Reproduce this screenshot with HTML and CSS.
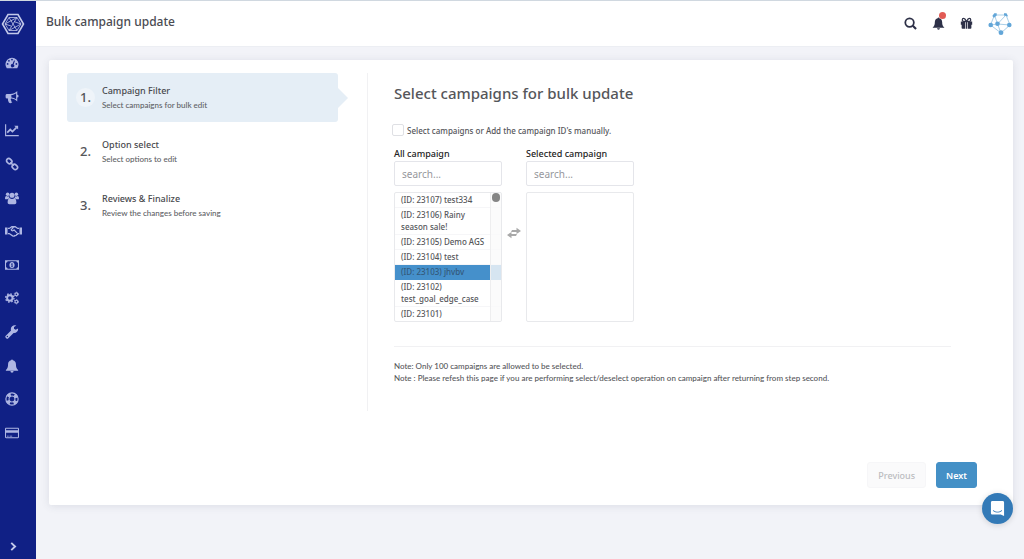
FILE: index.html
```html
<!DOCTYPE html>
<html lang="en">
<head>
    <meta charset="UTF-8">
    <meta name="viewport" content="width=device-width, initial-scale=1.0">
    <title>Bulk campaign update</title>
    <link rel="stylesheet" href="styles.css">
</head>
<body>
    <aside class="sidebar">
        <a href="#" class="logo" aria-label="Home">
            <svg viewBox="0 0 24 24" fill="none" stroke="currentColor">
                <path d="M7 2.500h10L22.500 12 17 21.500H7L1.500 12z" stroke-width="1.600"/>
                <path d="M8 5.500h8l4 6.500-4 6.500H8L4 12zM8 5.500l8 13M16 5.500l-8 13M4 12l12-6.500M20 12L8 18.500M4 12l6 2M20 12l-7-2.500" stroke-width=".8"/>
            </svg>
        </a>
        <nav class="menu">
            <a href="#" aria-label="Dashboard">
                <svg viewBox="0 0 16 16"><path fill-rule="evenodd" d="M2 14a7.500 7.500 0 1 1 12 0zM8 3a1 1 0 1 0 0 2 1 1 0 0 0 0-2zM4.500 4.500a1 1 0 1 0 0 2 1 1 0 0 0 0-2zM3 8a1 1 0 1 0 0 2 1 1 0 0 0 0-2zM13 8a1 1 0 1 0 0 2 1 1 0 0 0 0-2zM10.300 5L8.600 9.200a1.900 1.900 0 1 0 1.200.4l1.600-4.200z"/></svg>
            </a>
            <a href="#" aria-label="Campaigns">
                <svg viewBox="0 0 16 16"><path fill-rule="evenodd" d="M14 1v4.500a1.500 1.500 0 0 1 0 3V13c-2-1.800-4.500-3-7-3.200-.9.700-.3 1.600.2 2.300-.5.800.3 1.400 1.100 2-.8 1.200-3 1.100-3.900.3C3.800 12.700 3 11.500 3.500 9.800H2.300A1.600 1.600 0 0 1 .7 8.200V6.100c0-.9.700-1.600 1.600-1.600H6C9 4.500 12 3 14 1zm-1.300 2.600C11 4.900 9.200 5.500 7.300 5.700v2.900c1.900.2 3.700.8 5.400 2z"/></svg>
            </a>
            <a href="#" aria-label="Reports">
                <svg viewBox="0 0 16 16" fill="none" stroke="currentColor"><path d="M.7 1.500v13h15" stroke-width="1.300"/><path d="M2.500 11L6 7.500l2.500 2.300L13 5.300" stroke-width="2"/><path d="M10.500 3H15v4.500z" fill="currentColor" stroke="none"/></svg>
            </a>
            <a href="#" aria-label="Links">
                <svg viewBox="0 0 16 16" fill="none" stroke="currentColor" stroke-width="1.900"><rect x="1.600" y="2.200" width="6.500" height="5" rx="2.400" transform="rotate(45 4.800 4.700)"/><rect x="8" y="8.800" width="6.500" height="5" rx="2.400" transform="rotate(45 11.200 11.300)"/><path d="M6 6l4 4"/></svg>
            </a>
            <a href="#" aria-label="Affiliates">
                <svg viewBox="0 0 16 16"><circle cx="3" cy="3.600" r="2"/><circle cx="13" cy="3.600" r="2"/><circle cx="8" cy="4.900" r="2.900"/><path d="M0 8.500C0 6.600.7 5.600 1.500 5.700c1 .7 2 .6 3 .2 0 1 .4 1.800 1 2.500C4 8.500 3.500 9 3 9.500H1c-.6 0-1-.4-1-1zM16 8.500c0-1.900-.7-2.900-1.500-2.800-1 .7-2 .6-3 .2 0 1-.4 1.800-1 2.500 1.500.1 2 .6 2.500 1.100h2c.6 0 1-.4 1-1zM3 13c0-3 .8-4.500 2.500-4.700 1.500 1.200 3.500 1.200 5 0C12.200 8.500 13 10 13 13c0 1.200-.8 2-2 2H5c-1.200 0-2-.8-2-2z"/></svg>
            </a>
            <a href="#" aria-label="Partners">
                <svg class="wide" viewBox="0 0 20 14"><path d="M0 3h3v8H0zM17 3h3v8h-3z"/><path d="M3.500 4H5l3-2h4l3 2h1.500M3.500 10H5l4 2.700c1 .5 2 .3 2.600-.4 1 .2 1.700-.3 2-1 .8 0 1.300-.5 1.500-1.300h1.400M10 2.500L7.300 5.600c.5 1.500 2.300 1.500 3.400.1l3.600 3.800" fill="none" stroke="currentColor" stroke-width="1.500"/></svg>
            </a>
            <a href="#" aria-label="Payments">
                <svg viewBox="0 0 16 16"><path fill-rule="evenodd" d="M0 2.500h16v11H0zm3 1.200A2 2 0 0 1 1.200 5.500v5A2 2 0 0 1 3 12.300h10a2 2 0 0 1 1.800-1.800v-5A2 2 0 0 1 13 3.700z"/><path fill-rule="evenodd" d="M8 4.500c1.900 0 3 1.600 3 3.500s-1.100 3.500-3 3.500S5 9.900 5 8s1.100-3.500 3-3.500zM7 6.600v.8h.5v1.800H7v.8h2v-.8h-.4V5.900H8z"/></svg>
            </a>
            <a href="#" aria-label="Settings">
                <svg viewBox="0 0 16 16" fill="none" stroke="currentColor"><circle cx="5.500" cy="8" r="3.100" stroke-width="2.200"/><circle cx="5.500" cy="8" r="4.700" stroke-width="1.600" stroke-dasharray="1.800 1.890"/><circle cx="13" cy="3.800" r="1.600" stroke-width="1.300"/><circle cx="13" cy="3.800" r="2.500" stroke-width="1" stroke-dasharray="1.200 1.418"/><circle cx="13" cy="12.200" r="1.600" stroke-width="1.300"/><circle cx="13" cy="12.200" r="2.500" stroke-width="1" stroke-dasharray="1.200 1.418"/></svg>
            </a>
            <a href="#" aria-label="Tools">
                <svg viewBox="0 0 16 16"><path fill-rule="evenodd" d="M14.900 3.900l-2.700 1.500-1.900-1.100V2.200L13 .7A4.500 4.500 0 0 0 6.900 6.200L.9 12.200a1.700 1.700 0 0 0 0 2.400l.5.500a1.700 1.700 0 0 0 2.400 0l6-6a4.500 4.500 0 0 0 5.100-5.200zM2.700 12.300a.8.8 0 1 1 0 1.600.8.800 0 0 1 0-1.600z"/></svg>
            </a>
            <a href="#" aria-label="Alerts">
                <svg viewBox="0 0 16 16"><path d="M8 .5c.6 0 1 .4 1 1 2.300.5 3.500 2.300 3.500 4.500 0 3.500.8 5.200 2.500 6.500v.8H1v-.8C2.700 11.200 3.500 9.500 3.500 6c0-2.200 1.200-4 3.500-4.500 0-.6.400-1 1-1zM6.200 13.800h3.600a1.800 1.800 0 0 1-3.600 0z"/></svg>
            </a>
            <a href="#" aria-label="Support">
                <svg viewBox="0 0 16 16" fill="none" stroke="currentColor"><circle cx="8" cy="8" r="7" stroke-width="1.300"/><circle cx="8" cy="8" r="3.400" stroke-width="1.200"/><circle cx="8" cy="8" r="5.300" stroke-width="3.500" stroke-dasharray="4 4.325" stroke-dashoffset="-2.160"/></svg>
            </a>
            <a href="#" aria-label="Billing">
                <svg viewBox="0 0 16 16"><path fill-rule="evenodd" d="M1.300 2h13.400c.7 0 1.300.6 1.300 1.300v9.400c0 .7-.6 1.300-1.300 1.300H1.300C.6 14 0 13.400 0 12.700V3.300C0 2.600.6 2 1.300 2zM1.200 3.200v1.700h13.600V3.200zM1.200 7.700v5.100h13.600V7.700zM2.200 11h2v1h-2zM5.200 11h3v1h-3z"/></svg>
            </a>
        </nav>
        <button type="button" class="expand" aria-label="Expand menu">
            <svg viewBox="0 0 8 8" fill="none" stroke="currentColor" stroke-width="1.700"><path d="M2 .8L5.400 4 2 7.200"/></svg>
        </button>
    </aside>

    <div class="page">
        <header class="topbar">
            <h1>Bulk campaign update</h1>
            <div class="actions">
                <button type="button" aria-label="Search">
                    <svg viewBox="0 0 14 14" fill="none" stroke="currentColor"><circle cx="6" cy="6" r="4.600" stroke-width="1.900"/><path d="M9.500 9.500l3.500 3.500" stroke-width="2.300"/></svg>
                </button>
                <button type="button" class="bell" aria-label="Notifications">
                    <svg viewBox="0 0 16 16"><path d="M8 .5c.6 0 1 .4 1 1 2.300.5 3.500 2.300 3.500 4.500 0 3.500.8 5.200 2.500 6.500v.8H1v-.8C2.700 11.200 3.500 9.500 3.500 6c0-2.200 1.200-4 3.500-4.500 0-.6.400-1 1-1zM6.200 13.800h3.600a1.800 1.800 0 0 1-3.600 0z"/></svg>
                    <span class="dot"></span>
                </button>
                <button type="button" aria-label="Gifts">
                    <svg viewBox="0 0 16 16"><path d="M1 5.500h5.200v4H1zM9.800 5.500H15v4H9.800zM2 9.500h4.200v5H3c-.6 0-1-.4-1-1zM9.800 9.500H14v4c0 .6-.4 1-1 1H9.800zM7 6h2v8.500H7z"/><path d="M8 5.500C6.500 2.500 5.500 1.800 4.500 1.800a1.700 1.700 0 0 0 0 3.500zM8 5.500c1.500-3 2.500-3.700 3.500-3.700a1.700 1.700 0 0 1 0 3.500z" fill="none" stroke="currentColor" stroke-width="1.500"/></svg>
                </button>
                <a href="#" class="avatar" aria-label="Account">
                    <svg viewBox="0 0 24 24"><path d="M6.500 3h11.500l4 10-9 8L2.500 13zM6.500 3L9.500 12 18 3M9.500 12l3.500 9M9.500 12l12.500 1M2.500 13l7-1" fill="none" stroke="#a9cfe8"/><g fill="#62a6d8"><path d="M4.300 4l2-2.800h2.400v2.300L6 5.800zM20.200 4.500l-1.700-3.300H16v2.300z"/><circle cx="2.700" cy="13" r="2.300"/><circle cx="9.500" cy="11.700" r="2.300"/><circle cx="21.300" cy="13" r="2.300"/><circle cx="13" cy="20.700" r="2.400"/></g></svg>
                </a>
            </div>
        </header>

        <main class="card">
            <div class="wizard">
                <ol class="steps">
                    <li class="step active">
                        <span class="num">1.</span>
                        <div>
                            <h3>Campaign Filter</h3>
                            <p>Select campaigns for bulk edit</p>
                        </div>
                    </li>
                    <li class="step">
                        <span class="num">2.</span>
                        <div>
                            <h3>Option select</h3>
                            <p>Select options to edit</p>
                        </div>
                    </li>
                    <li class="step">
                        <span class="num">3.</span>
                        <div>
                            <h3>Reviews &amp; Finalize</h3>
                            <p>Review the changes before saving</p>
                        </div>
                    </li>
                </ol>

                <section class="content">
                    <h2>Select campaigns for bulk update</h2>
                    <label class="manual">
                        <input type="checkbox" id="manual">
                        Select campaigns or Add the campaign ID's manually.
                    </label>

                    <div class="picker">
                        <div class="column">
                            <label for="search-all">All campaign</label>
                            <input type="text" id="search-all" placeholder="search...">
                            <div class="list">
                                <ul role="listbox" aria-label="All campaign">
                                    <li role="option">(ID: 23107) test334</li>
                                    <li role="option">(ID: 23106) Rainy season sale!</li>
                                    <li role="option">(ID: 23105) Demo AGS</li>
                                    <li role="option">(ID: 23104) test</li>
                                    <li role="option" class="selected" aria-selected="true">(ID: 23103) jhvbv</li>
                                    <li role="option">(ID: 23102) test_goal_edge_case</li>
                                    <li role="option">(ID: 23101)</li>
                                </ul>
                                <span class="track"><span class="thumb"></span></span>
                            </div>
                        </div>
                        <svg class="swap" viewBox="0 0 14 12"><path d="M5 3h4.500V.8L14 4 9.500 7V5H4zM9 9H4.500v2.200L0 8l4.500-3v2H10z"/></svg>
                        <div class="column">
                            <label for="search-selected">Selected campaign</label>
                            <input type="text" id="search-selected" placeholder="search...">
                            <div class="list">
                                <ul role="listbox" aria-label="Selected campaign"></ul>
                            </div>
                        </div>
                    </div>

                    <div class="notes">
                        <p>Note: Only 100 campaigns are allowed to be selected.</p>
                        <p>Note : Please refesh this page if you are performing select/deselect operation on campaign after returning from step second.</p>
                    </div>
                </section>
            </div>

            <div class="buttons">
                <button type="button" class="btn" disabled>Previous</button>
                <button type="button" class="btn primary">Next</button>
            </div>
        </main>
    </div>

    <button type="button" class="chat" aria-label="Open chat">
        <svg viewBox="0 0 16 16"><path d="M2.500 0h11c.8 0 1.500.7 1.500 1.500V16l-3.500-1.500h-9c-.8 0-1.500-.7-1.500-1.500V1.500C1 .7 1.700 0 2.500 0z" fill="#fff"/><path d="M3.500 10.300c2.500 2.200 6.500 2.200 9 0" fill="none" stroke="#337ab7" stroke-linecap="round"/></svg>
    </button>
</body>
</html>
```
FILE: styles.css
```css
* {
    box-sizing: border-box;
}
body {
    margin: 0;
    display: flex;
    min-height: 100vh;
    font-family: "Noto Sans", sans-serif;
    font-size: 8px;
    color: #55565a;
    fill: currentColor;
    background-color: #f2f3f8;
    border-top: 1px solid #d0d8e0;
}
h1, h2, h3, p, ul, ol {
    margin: 0;
    padding: 0;
    font-weight: 500;
}
ul, ol {
    list-style: none;
}
button {
    font-family: inherit;
    border: none;
    padding: 0;
    background: none;
    cursor: pointer;
}
svg {
    display: block;
}

/* sidebar */
.sidebar {
    width: 36px;
    flex-shrink: 0;
    display: flex;
    flex-direction: column;
    background: #102085;
    color: #aeb6e3;
    padding: 11px 0 8px;
}
.logo {
    color: #c3c9ea;
    padding-left: 1px;
}
.logo svg {
    width: 24px;
    height: 24px;
}
.menu {
    display: flex;
    flex-direction: column;
    justify-content: space-between;
    height: 384px;
    margin-top: 20px;
    padding-left: 5px;
}
.menu a {
    color: inherit;
}
.menu svg {
    width: 14px;
    height: 14px;
}
.menu .wide {
    width: 17px;
}
.expand {
    color: #c3c9ea;
    margin-top: auto;
    padding-left: 9px;
    text-align: left;
}
.expand svg {
    width: 9px;
    height: 9px;
}

/* top bar */
.page {
    flex: 1;
    min-width: 0;
}
.topbar {
    height: 46px;
    display: flex;
    justify-content: space-between;
    align-items: center;
    padding: 0 12px 0 10px;
    background: #fff;
    border-bottom: 1px solid #eceef3;
}
.topbar h1 {
    font-size: 12px;
    line-height: 16px;
    padding-bottom: 3px;
    color: #4a4b52;
}
.actions {
    display: flex;
    align-items: center;
    gap: 15px;
    color: #2d3047;
}
.actions button {
    color: inherit;
    position: relative;
}
.actions button svg {
    width: 13px;
    height: 13px;
}
.dot {
    position: absolute;
    top: -5px;
    right: -1px;
    width: 7px;
    height: 7px;
    border-radius: 50%;
    background: #e25b55;
}
.avatar svg {
    width: 24px;
    height: 24px;
}

/* card */
.card {
    margin: 13px 11px 54px 13px;
    padding: 13px 36px 17px 18px;
    background: #fff;
    border-radius: 2px;
    box-shadow: 0 1px 8px rgba(60, 65, 90, 0.12);
}
.wizard {
    display: flex;
}
.steps {
    width: 301px;
    min-height: 338px;
    flex-shrink: 0;
    padding-right: 29px;
    border-right: 1px solid #f1f1f3;
}
.step {
    position: relative;
    display: flex;
    align-items: center;
    gap: 7px;
    height: 49px;
    margin-bottom: 5px;
    padding-left: 9px;
    border-radius: 3px;
}
.step.active {
    background: #e5eef6;
}
.step.active::after {
    content: "";
    position: absolute;
    left: 100%;
    top: 15px;
    border: 10px solid transparent;
    border-left-color: #e5eef6;
    border-right: none;
}
.num {
    width: 19px;
    height: 19px;
    border-radius: 50%;
    font-size: 13px;
    line-height: 19px;
    font-weight: 500;
    text-align: center;
}
.active .num {
    background: #eff4f9;
}
.step h3 {
    font-size: 9px;
    line-height: 15px;
    color: #48494d;
}
.step p {
    font-family: Lato, sans-serif;
    line-height: 15px;
    color: #606165;
}

.content {
    flex: 1;
    min-width: 0;
    padding: 10px 26px 0 26px;
}
.content h2 {
    font-size: 15px;
    line-height: 20px;
}
.manual {
    display: flex;
    align-items: center;
    gap: 3px;
    height: 12px;
    margin: 21px 0 11px -2px;
    font-weight: 500;
}
.manual input {
    appearance: none;
    width: 12px;
    height: 12px;
    margin: 0;
    border: 1px solid #dfe0e4;
    border-radius: 2px;
    background: #fff;
}
.manual input:checked {
    background: #4490c6;
}
.picker {
    display: flex;
}
.column {
    width: 108px;
}
.column label {
    display: block;
    font-size: 9px;
    line-height: 14px;
    font-weight: 500;
    color: #222;
}
.column input {
    display: block;
    width: 100%;
    height: 25px;
    padding: 0 7px;
    border: 1px solid #e4e5ea;
    border-radius: 2px;
    font-family: inherit;
    font-size: 10px;
    color: #55565a;
}
.column input::placeholder {
    color: #96979c;
}
.list {
    position: relative;
    height: 130px;
    margin-top: 6px;
    border: 1px solid #e8e9ec;
    border-radius: 2px;
    overflow: hidden;
}
.list li {
    padding: 1px 14px 1px 6px;
    border-bottom: 1px solid #f6f6f8;
    line-height: 12px;
    font-weight: 500;
    cursor: pointer;
}
.list li.selected {
    background: #4590cb;
    border-color: #4590cb;
    color: #34597a;
}
.track {
    position: absolute;
    top: 0;
    right: 0;
    bottom: 0;
    width: 11px;
    border-left: 1px solid #eeeeef;
    background: rgba(250, 250, 250, 0.8);
}
.thumb {
    display: block;
    width: 8px;
    height: 9px;
    margin: 0 1px;
    border-radius: 4px;
    background: #858585;
}
.swap {
    width: 14px;
    height: 12px;
    margin: 80px 5px 0;
    color: #a9a9a9;
}
.notes {
    margin-top: 24px;
    padding-top: 13px;
    border-top: 1px solid #f1f1f3;
    font-family: Lato, sans-serif;
    line-height: 12px;
}

.buttons {
    display: flex;
    justify-content: flex-end;
    gap: 10px;
    margin-top: 51px;
}
.btn {
    height: 26px;
    padding: 0 10px;
    border: 1px solid #f6f6f8;
    border-radius: 3px;
    background: #fafafb;
    font-size: 9px;
    font-weight: 500;
    color: #bbbcc0;
}
.btn.primary {
    padding: 0 9px;
    border-color: #4490c6;
    background: #4490c6;
    color: #fff;
    font-weight: 600;
}

.chat {
    position: fixed;
    right: 11px;
    bottom: 35px;
    width: 31px;
    height: 31px;
    display: flex;
    align-items: center;
    justify-content: center;
    border-radius: 50%;
    background: #337ab7;
    box-shadow: 0 1px 6px rgba(0, 0, 0, 0.15);
}
.chat svg {
    width: 15px;
    height: 15px;
}
```
